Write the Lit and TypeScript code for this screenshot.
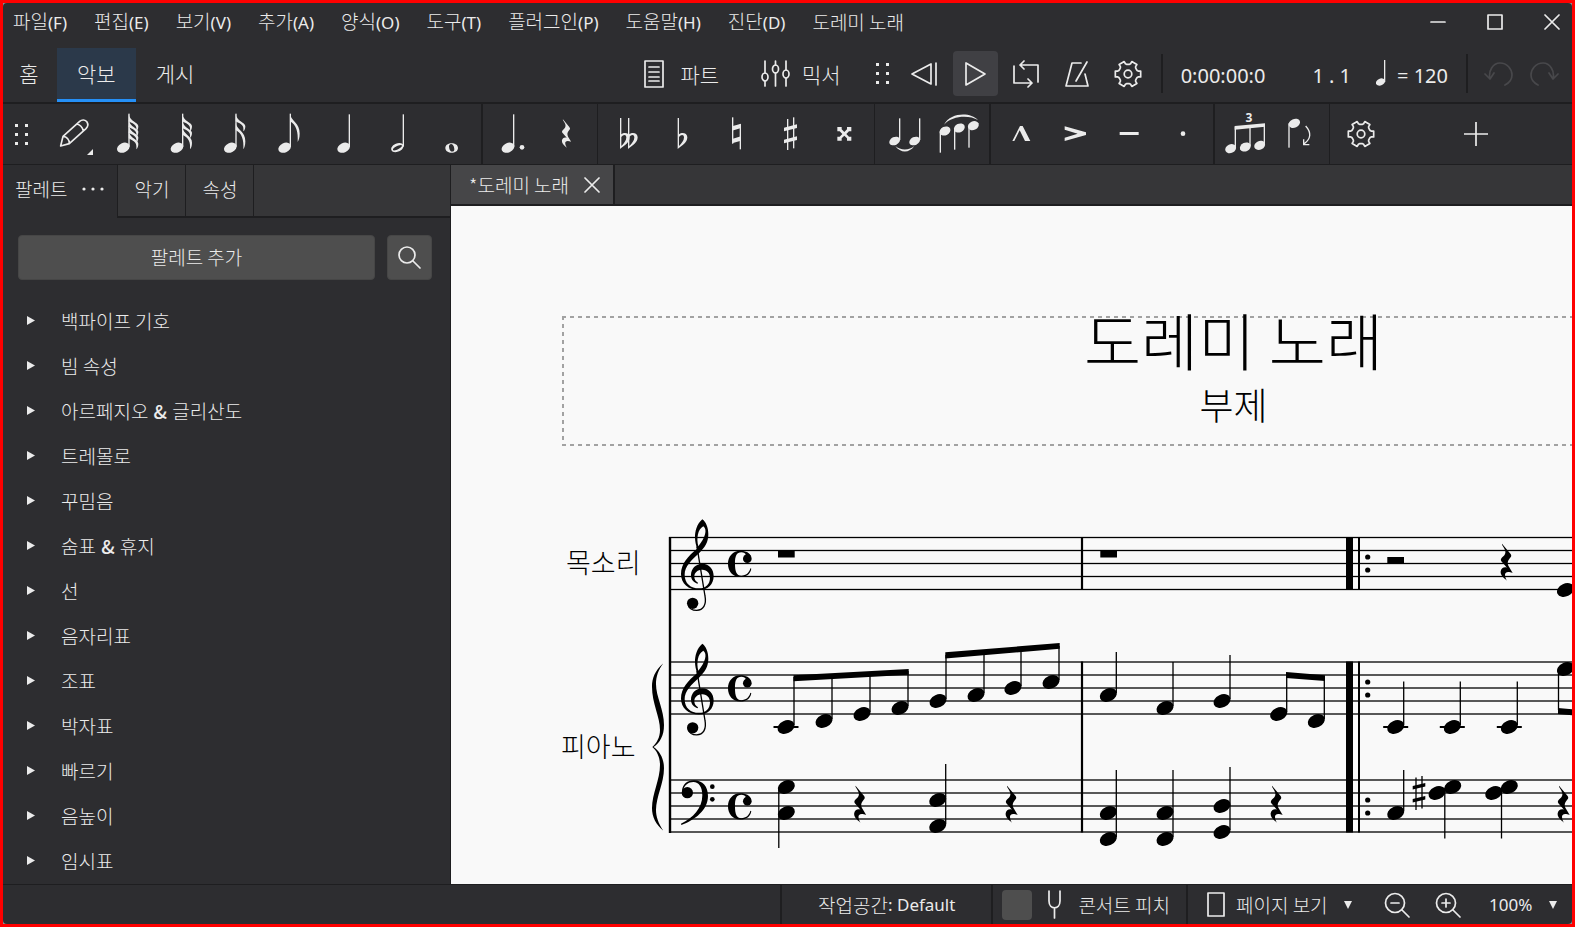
import { LitElement, html, svg, css } from "lit";
import { customElement, state } from "lit/decorators.js";

const MENUS = [
  ["파일", "(F)"], ["편집", "(E)"], ["보기", "(V)"], ["추가", "(A)"], ["양식", "(O)"],
  ["도구", "(T)"], ["플러그인", "(P)"], ["도움말", "(H)"], ["진단", "(D)"], ["도레미 노래", ""],
];

const PALETTES = [
  "백파이프 기호", "빔 속성", "아르페지오 & 글리산도", "트레몰로", "꾸밈음", "숨표 & 휴지", "선",
  "음자리표", "조표", "박자표", "빠르기", "음높이", "임시표",
];

/* ---------- shared glyphs ---------- */

const head = (x: number, y: number, rx = 20, ry = 14) =>
  svg`<ellipse cx=${x} cy=${y} rx=${rx} ry=${ry} transform="rotate(-25 ${x} ${y})"></ellipse>`;

const stem = (x: number, y1: number, y2: number, w = 4) =>
  svg`<rect x=${x - w / 2} y=${Math.min(y1, y2)} width=${w} height=${Math.abs(y2 - y1)}></rect>`;

const REST =
  "M-12,-55 L12,-26 C18,-19 16,-16 12,-12 C4,-2 4,4 8,13 L20,33 C2,26 -3,33 -3,38 C-3,45 0,51 3,56 C-10,46 -17,38 -16,28 C-14,18 -6,14 3,17 L-14,-2 C-18,-7 -14,-12 -8,-17 C0,-24 0,-32 -6,-42 L-12,-52Z";

const gearPath = (() => {
  const pts: string[] = [];
  for (let i = 0; i < 6; i++) {
    const a = i * 60;
    for (const [d, r] of [[-21, 9.8], [-16, 10.6], [-13, 13], [13, 13], [16, 10.6], [21, 9.8], [30, 9.6]]) {
      const t = ((a + d) * Math.PI) / 180;
      pts.push(`${(r * Math.cos(t)).toFixed(2)},${(r * Math.sin(t)).toFixed(2)}`);
    }
  }
  return "M" + pts.join("L") + "Z";
})();

const gear = html`<svg class="line" width="30" height="30" viewBox="-15 -15 30 30">
  <path d=${gearPath}></path><circle r="3.8"></circle></svg>`;

const handle = html`<svg class="solid" width="13" height="21" viewBox="0 0 13 21">
  <path d="M0,0h3v3h-3zM10,0h3v3h-3zM0,9h3v3h-3zM10,9h3v3h-3zM0,18h3v3h-3zM10,18h3v3h-3z"></path></svg>`;

const caret = html`<svg class="solid" width="10" height="8" viewBox="0 0 10 8"><path d="M1,0h8l-4,8z"></path></svg>`;

/* ---------- note input bar ---------- */

const flag = (s: number, y: number, h: number) =>
  svg`<path d="M${s},${y} C${s + 3},${y + 22} ${s + 30},${y + 26} ${s + 29},${y + h * 0.7} C${s + 29},${y + h * 0.85} ${s + 26},${y + h * 0.95} ${s + 23},${y + h} C${s + 25},${y + h * 0.65} ${s + 19},${y + 32} ${s},${y + 22} Z"></path>`;

const flagged = (hx: number, n: number) => {
  const s = hx + 17;
  const step = n > 3 ? 17 : n > 2 ? 20 : 26;
  const last = n === 1 ? 84 : 106 - step * (n - 1);
  return svg`${head(hx, 443)}${stem(s, 341, 440)}
    ${Array.from({ length: n }, (_, i) => flag(s - 1, 342 + i * step, i === n - 1 ? last : 52))}`;
};

const flatGlyph = (x: number) =>
  svg`<path fill-rule="evenodd" d="M${x},354 h4 v49 C${x + 12},395 ${x + 29},398 ${x + 29},412 C${x + 29},428 ${x + 12},438 ${x},447Z M${x + 4},411 C${x + 10},402 ${x + 19},403 ${x + 19},412 C${x + 19},422 ${x + 12},430 ${x + 4},438Z"></path>`;

const NOTE_GROUPS: { label: string; art: unknown }[][] = [
  [
    { label: "음표 입력", art: svg`<g class="pen"><path d="M-37,438 L-30,409 L20,364 C27,358 37,359 42,366 C46,373 45,380 39,386 L-11,431 Z M-30,409 C-19,410 -11,419 -11,431 M12,372 C20,374 28,382 31,392"></path></g><path d="M60,447 V465 H42Z"></path>` },
    { label: "64분음표", art: flagged(-11, 4) },
    { label: "32분음표", art: flagged(-12, 3) },
    { label: "16분음표", art: flagged(-14, 2) },
    { label: "8분음표", art: flagged(-13, 1) },
    { label: "4분음표", art: svg`${head(2, 443)}${stem(19, 343, 440)}` },
    { label: "2분음표", art: svg`<path fill-rule="evenodd" d="M-17,450 C-20,440 -6,428 8,429 C18,430 22,436 18,444 C12,456 -12,462 -17,450Z M-12,450 C-8,455 14,443 15,437 C13,431 -14,443 -12,450Z"></path>${stem(19, 343, 440)}` },
    { label: "온음표", art: svg`<path fill-rule="evenodd" d="M-17,444 C-17,425 21,425 21,444 C21,463 -17,463 -17,444Z M-6,440 C-5,459 11,458 10,447 C9,429 -6,428 -6,440Z"></path>` },
  ],
  [
    { label: "점음표", art: svg`${head(-15, 443)}${stem(2, 343, 440)}<circle cx="27" cy="442" r="7"></circle>` },
    { label: "쉼표", art: svg`<path transform="translate(-3 400) scale(.77)" d=${REST}></path>` },
  ],
  [
    { label: "겹내림표", art: svg`${flatGlyph(-24)}${flatGlyph(0)}` },
    { label: "내림표", art: flatGlyph(-13) },
    { label: "제자리표", art: svg`${stem(-10, 352, 431)}${stem(13, 372, 448)}<path d="M-12,379 L15,371 V384 L-12,392Z M-12,417 L15,409 V422 L-12,430Z"></path>` },
    { label: "올림표", art: svg`${stem(-7, 357, 450)}${stem(11, 352, 445)}<path d="M-18,383 L21,373 V384 L-18,394Z M-18,419 L21,409 V420 L-18,430Z"></path>` },
    { label: "겹올림표", art: svg`<path d="M-20,381 h13 v7 l8,8 l8,-8 v-7 h13 v13 h-7 l-8,8 l8,8 h7 v12 h-13 v-7 l-8,-8 l-8,8 v7 h-13 v-12 h7 l8,-8 l-8,-8 h-7Z"></path>` },
  ],
  [
    { label: "붙임줄", art: svg`${head(-31, 423, 17, 12)}${stem(-16, 355, 420)}${head(29, 423, 17, 12)}${stem(44, 355, 420)}<path d="M-29,438 C-14,452 13,452 28,438 C13,460 -14,460 -29,438Z"></path>` },
    { label: "이음줄", art: svg`${head(-42, 393, 17, 13)}${stem(-56, 395, 458)}${head(1, 384, 17, 13)}${stem(-13, 386, 449)}${head(43, 377, 17, 13)}${stem(30, 379, 443)}<path d="M-45,374 C-25,336 35,336 57,360 C32,345 -20,345 -45,374Z"></path>` },
  ],
  [
    { label: "마르카토", art: svg`<path d="M-26,423 L-3,378 H5 L28,423 H12 L-4,391 L-20,423Z"></path>` },
    { label: "악센트", art: svg`<path d="M-31,379 L33,397 V405 L-31,423 V413 L8,401 L-31,389Z"></path>` },
    { label: "테누토", art: svg`<path d="M-28,396 H29 V405 H-28Z"></path>` },
    { label: "스타카토", art: svg`<circle cx="0" cy="401" r="7"></circle>` },
  ],
  [
    { label: "셋잇단음표", art: svg`<text x="12" y="366" text-anchor="middle">3</text><path d="M-31,378 L60,370 V380 L-31,389Z"></path>${stem(-29, 380, 442)}${stem(15, 378, 438)}${stem(58, 374, 434)}${head(-43, 446, 17, 13)}${head(1, 441, 17, 13)}${head(44, 436, 17, 13)}` },
    { label: "방향 뒤집기", art: svg`${head(-14, 370, 18, 13)}${stem(-30, 370, 443)}<path class="thin" d="M20,378 C38,398 36,416 15,432 M14,418 V434 H31"></path>` },
  ],
];

/* ---------- sheet music ---------- */

const hLine = (x1: number, x2: number, y: number, w = 1.3) =>
  svg`<rect x=${x1} y=${y - w / 2} width=${x2 - x1} height=${w}></rect>`;
const vLine = (x: number, y1: number, y2: number, w = 1.3) =>
  svg`<rect x=${x - w / 2} y=${y1} width=${w} height=${y2 - y1}></rect>`;
const n = (x: number, y: number) => head(x, y, 8.9, 6.4);
const up = (x: number, ys: number[], top: number) =>
  svg`${ys.map((y) => n(x, y))}${vLine(x + 8, top, Math.max(...ys) - 2)}`;
const ledger = (x: number) => hLine(x - 12.5, x + 12.5, 727, 2);
const rest = (x: number, y: number) => svg`<path transform="translate(${x} ${y}) scale(.3333)" d=${REST}></path>`;

const treble = (dy: number) => svg`<g transform="translate(550 ${500 + dy}) scale(.3333)">
  <path fill-rule="evenodd" d="M441,146 C415,168 393,190 393,222 C393,250 415,270 447,270 C475,270 491,252 491,228 C491,208 478,191 457,191 C437,191 423,206 423,225 C423,240 432,248 443,251 L444,248 C437,244 433,237 433,230 C433,217 443,209 457,209 C472,209 480,220 480,233 C480,253 467,265 447,265 C422,265 404,250 404,224 C404,200 425,180 447,160 C465,142 475,127 475,103 C475,82 468,66 457,58 C440,72 435,95 435,112 C435,125 438,135 441,146Z M460,79 C473,88 466,114 445,139 C439,115 443,88 460,79Z"></path>
  <path class="curl" d="M441,140 L465,288 C470,314 460,331 440,331 C428,331 418,326 415,316"></path>
  <circle cx="428" cy="310" r="17"></circle></g>`;

const common = (dy: number) => svg`<g transform="translate(550 ${500 + dy}) scale(.3333)">
  <path d="M571,152 C548,152 534,170 534,191 C534,213 548,231 571,231 C590,231 601,222 604,206 L601,205 C598,219 588,227 574,227 C560,227 555,215 555,191 C555,168 560,157 574,157 C582,157 586,160 588,165 L604,170 C600,159 588,152 571,152Z"></path>
  <circle cx="592" cy="176" r="13"></circle></g>`;

const RUN: [number, number][] = [[786, 727], [824, 721], [862, 714], [900, 708], [938, 701], [976, 695], [1013, 688], [1051, 682]];
const STAVES = [537.5, 662, 780];

const sheet = html`<svg class="system" width="1454" height="370" viewBox="451 500 1454 370" role="img" aria-label="악보">
  ${STAVES.map((y) => [0, 1, 2, 3, 4].map((i) => hLine(669, 1905, y + i * 13)))}
  ${vLine(670, 537, 833, 2.4)}
  ${[[537, 590], [661.5, 832.5]].map(([a, b]) => svg`${vLine(1082, a, b, 2.2)}${vLine(1349.5, a, b, 7)}${vLine(1359, a, b, 2)}`)}
  ${[557, 570, 682, 695, 800, 813].map((y) => svg`<circle cx="1367.7" cy=${y} r="2.6"></circle>`)}
  ${treble(0)}${treble(124.5)}${common(0)}${common(124.5)}${common(242.5)}
  <g transform="translate(550 500) scale(.3333)">
    <path d="M340,490 C315,512 306,535 306,560 C306,610 330,650 330,690 C330,712 320,730 307,741 C320,752 330,770 330,795 C330,840 306,880 306,925 C306,950 318,975 340,992 C325,970 318,950 318,930 C318,890 342,850 342,805 C342,775 330,755 311,741 C330,727 342,708 342,675 C342,630 318,590 318,552 C318,530 325,510 340,490Z"></path>
    <circle cx="412" cy="878" r="17"></circle><circle cx="487" cy="860" r="7"></circle><circle cx="487" cy="898" r="7"></circle>
    <path d="M396,876 C396,852 413,841 432,841 C458,841 474,860 474,888 C474,930 435,960 394,975 L393,971 C430,953 457,925 457,886 C457,862 447,846 430,846 C415,846 403,856 401,868Z"></path>
  </g>
  <text x="566" y="573">목소리</text>
  <text x="561" y="757">피아노</text>
  <rect x="778" y="550.5" width="16.7" height="7"></rect>
  <rect x="1100.3" y="550.5" width="16.7" height="7"></rect>
  <rect x="1387.3" y="557" width="16.7" height="7"></rect>
  ${rest(1506, 562)}${n(1565.5, 590)}
  ${RUN.map(([x, y], i) => up(x, [y], i < 4 ? 677 - i * 2 : 655 - (i - 4) * 3))}
  ${ledger(786)}
  <path d="M793.5,675.3 L908.7,669 V674.7 L793.5,681.3Z M945.3,652.3 L1059.7,643 V648.8 L945.3,658.4Z M1286,672 L1325,675.3 V681 L1286,678Z M1558,708 L1600,712 V718 L1558,714Z"></path>
  ${up(1108.3, [695], 652)}${up(1165, [708], 662)}${up(1222, [701], 655)}
  ${up(1278.7, [714], 674)}${up(1316.3, [721], 677)}
  ${[1395.7, 1452.3, 1509.3].map((x) => svg`${up(x, [727], 681.5)}${ledger(x)}`)}
  ${n(1565.5, 669)}${vLine(1558.5, 671, 710)}
  ${n(786.3, 787)}${n(786.3, 813)}${vLine(778.8, 789, 848)}
  ${up(937.7, [800, 826], 764)}${up(1108.3, [813, 839], 770)}${up(1165, [813, 839], 770)}${up(1222, [806, 832], 767)}
  ${rest(859.5, 804)}${rest(1011, 804)}${rest(1276, 804)}${rest(1563, 804)}
  ${up(1395.7, [813], 770)}
  ${vLine(1416, 777.5, 810)}${vLine(1422, 776, 808.5)}
  <path d="M1412.7,786 L1425.3,783 V786.5 L1412.7,789.5Z M1412.7,799 L1425.3,796 V799.5 L1412.7,802.5Z"></path>
  ${n(1437, 793)}${n(1452.7, 787)}${vLine(1444.8, 788, 838.5)}
  ${n(1493.7, 793)}${n(1509.3, 787)}${vLine(1501.5, 788, 838.5)}
</svg>`;

@customElement("app-root")
export class AppRoot extends LitElement {
  @state() private tab = "악보";

  static styles = css`
    :host {
      display: block;
      height: 100vh;
      box-sizing: border-box;
      border: 3px solid #ff0000;
      background: #8d8d8f;
      color: #ebebeb;
      font: 300 19px/24px "Noto Sans CJK KR", sans-serif;
      overflow: hidden;
    }
    * { box-sizing: border-box; }
    button, select, input { font: inherit; color: inherit; background: none; border: 0; margin: 0; padding: 0; }
    button { cursor: pointer; white-space: nowrap; }
    svg { display: block; flex: none; }
    .solid { fill: #ebebeb; }
    .line { fill: none; stroke: #ebebeb; stroke-width: 1.7; stroke-linejoin: round; stroke-linecap: round; }
    .latin { font-family: "Noto Sans", sans-serif; font-weight: 400; font-size: 17px; }
    .window { height: 100%; display: flex; flex-direction: column; background: #2d2d30; border-radius: 4px; overflow: hidden; }

    .titlebar { display: flex; justify-content: space-between; align-items: center; height: 38px; flex: none; }
    .menus { display: flex; gap: 27px; padding-left: 10px; }
    .controls { display: flex; gap: 17px; }
    .controls button { width: 40px; height: 38px; display: grid; place-items: center; }

    .main-bar { display: flex; justify-content: space-between; height: 63px; padding-top: 7px; border-bottom: 2px solid #1e1e20; flex: none; }
    .tabs { display: flex; font-size: 21px; }
    .tabs button { min-width: 54px; padding: 0 20px 2px; border-bottom: 3px solid transparent; }
    .tabs button:first-child { padding: 0 18px 2px 16px; }
    .tabs .on { background: #2b394a; border-bottom-color: #2590f7; }
    .tools { display: flex; align-items: center; padding: 0 6px 3px 0; }
    .named { display: flex; align-items: center; gap: 15px; font-size: 21px; margin-right: 42px; }
    .named.mixer { gap: 12px; margin-right: 35px; }
    .transport { display: flex; gap: 6px; margin: 0 10px 0 13px; }
    .square { width: 45px; height: 45px; display: grid; place-items: center; border-radius: 4px; }
    .play { background: #404044; }
    .rule { width: 2px; height: 39px; background: #1e1e20; }
    .digits { font: 400 20px/24px "Noto Sans", sans-serif; padding-top: 4px; }
    .time { margin-left: 18px; }
    .beat { margin-left: 47px; }
    .tempo { display: flex; gap: 11px; margin: 0 18px 0 25px; }
    .history { display: flex; padding-left: 8px; }
    .history .line { stroke: #48484b; }

    .note-bar { display: flex; align-items: center; height: 61px; border-bottom: 1px solid #1e1e20; fill: #ebebeb; flex: none; }
    .note-bar .handle { padding: 0 18px 0 12px; }
    .group { display: flex; padding-right: 3px; border-right: 2px solid #1e1e20; height: 60px; }
    .group + .group { padding-left: 3px; border-right-width: 1px; }
    .group:nth-of-type(4), .group:nth-of-type(5) { border-right-width: 2px; }
    .cell { width: 54px; height: 60px; display: grid; place-items: center; }
    .cell text { font: 700 36px "Noto Sans", sans-serif; }
    .pen, .thin { fill: none; stroke: #ebebeb; stroke-width: 5; stroke-linejoin: round; }
    .thin { stroke-width: 4; }
    .after { margin-left: 4px; }
    .add { margin-left: 61px; }

    .body { flex: 1; display: flex; min-height: 0; }
    .panel { width: 448px; flex: none; border-right: 1px solid #1e1e20; overflow: hidden; }
    .panel-tabs { display: flex; height: 53px; }
    .panel-tabs > * { padding: 0 16px 3px; border-right: 1px solid #1e1e20; border-bottom: 2px solid #1e1e20; background: #363638; }
    .panel-tabs .current { display: flex; align-items: center; gap: 15px; padding: 0 12px 5px; background: none; border-bottom: 0; }
    .panel-tabs .fill { flex: 1; border-right: 0; }
    .finder { display: flex; gap: 12px; padding: 17px 18px 18px 15px; }
    .finder button { height: 45px; background: #4e4e4e; border-radius: 4px; border: 1px solid #464646; }
    .finder .wide { flex: 1; padding-bottom: 1px; }
    .finder .seek { width: 45px; display: grid; place-items: center; }
    .list { list-style: none; margin: 0; padding: 0; }
    .list button { display: flex; align-items: center; gap: 26px; width: 100%; height: 45px; padding-left: 24px; text-align: left; }
    .amp { font-weight: 500; padding: 0 1px; }

    .work { flex: 1; min-width: 0; display: flex; flex-direction: column; }
    .docs { display: flex; height: 41px; background: #363638; border-bottom: 2px solid #1e1e20; flex: none; }
    .doc { display: flex; align-items: center; gap: 15px; padding: 0 13px 0 18px; background: #464648; border-right: 2px solid #1e1e20; }
    .canvas { flex: 1; overflow: hidden; background: #f9f9f9; color: #000; min-height: 0; }
    .page { width: 1454px; padding-top: 110px; }
    .frame {
      margin: 0 0 54px 111px; height: 130px; text-align: center;
      --h: repeating-linear-gradient(90deg, #a2a2a2 0 4px, transparent 4px 8px);
      --v: repeating-linear-gradient(#a2a2a2 0 4px, transparent 4px 8px);
      background: var(--h) 0 0 / 100% 2px no-repeat, var(--h) 0 100% / 100% 2px no-repeat, var(--v) 0 0 / 2px 100% no-repeat;
    }
    .frame h1 { margin: 0; font: 300 62px/46px "Noto Sans CJK KR", sans-serif; }
    .frame h2 { margin: 0; padding-top: 20px; font: 300 37px/44px "Noto Sans CJK KR", sans-serif; }
    .system text { font: 300 27px "Noto Sans CJK KR", sans-serif; }
    .curl { fill: none; stroke: #000; stroke-width: 4; }

    .status { display: flex; justify-content: flex-end; height: 40px; border-top: 1px solid #1e1e20; flex: none; }
    .status > * { border-left: 2px solid #1e1e20; display: flex; align-items: center; }
    .space { padding: 0 36px; white-space: pre; }
    .pitch { padding: 0 16px 0 9px; }
    .pitch input { appearance: none; width: 30px; height: 30px; background: #4e4e4e; border-radius: 4px; margin-right: 15px; }
    .pitch svg { margin-right: 16px; }
    .view { padding: 0 14px 0 19px; }
    .pick { display: flex; align-items: center; gap: 15px; }
    .pick select { appearance: none; }
    .pick svg { pointer-events: none; }
    .view > svg { margin-right: 11px; }
    .zooms { display: flex; gap: 25px; margin: 0 28px 0 31px; }
  `;

  private latin(text: string, cls = "latin") {
    return text ? html`<span class=${cls}>${text}</span>` : "";
  }

  private palette(name: string) {
    const [a, b] = name.split("&");
    return b === undefined ? name : html`${a}<span class="amp">&amp;</span>${b}`;
  }

  render() {
    return html`<div class="window">
      <header class="titlebar">
        <nav class="menus" aria-label="메뉴">
          ${MENUS.map(([name, key]) => html`<button>${name}${this.latin(key)}</button>`)}
        </nav>
        <div class="controls">
          <button aria-label="최소화"><svg class="line" width="16" height="16"><path d="M1,8H15"></path></svg></button>
          <button aria-label="최대화"><svg class="line" width="16" height="16"><path d="M1,1H15V15H1Z"></path></svg></button>
          <button aria-label="닫기"><svg class="line" width="16" height="16"><path d="M1,1L15,15M15,1L1,15"></path></svg></button>
        </div>
      </header>

      <div class="main-bar">
        <nav class="tabs">
          ${["홈", "악보", "게시"].map((t) => html`<button class=${t === this.tab ? "on" : ""} @click=${() => (this.tab = t)}>${t}</button>`)}
        </nav>
        <div class="tools">
          <button class="named"><svg class="line" width="22" height="28"><path d="M2,1H20V27H2ZM6,7H16M6,12H16M6,17H16M6,21H16"></path></svg>파트</button>
          <button class="named mixer"><svg class="line" width="29" height="27"><path d="M4,1V13M4,21V26M14.5,1V5M14.5,13V26M25,1V10M25,18V26"></path><ellipse cx="4" cy="17" rx="3" ry="4"></ellipse><ellipse cx="14.5" cy="9" rx="3" ry="4"></ellipse><ellipse cx="25" cy="14" rx="3" ry="4"></ellipse></svg>믹서</button>
          ${handle}
          <div class="transport">
            <button class="square" aria-label="되감기"><svg class="line" width="28" height="24"><path d="M21,2V22L2,12ZM26,1V23"></path></svg></button>
            <button class="square play" aria-label="재생"><svg class="line" width="22" height="24"><path d="M2,1V23L21,12Z"></path></svg></button>
            <button class="square" aria-label="반복"><svg class="line" width="28" height="28"><path d="M2,6V23H20M16,19L20,23L16,27M26,22V5H8M12,1L8,5L12,9"></path></svg></button>
            <button class="square" aria-label="메트로놈"><svg class="line" width="26" height="28"><path d="M17,3H8L2,26H24L21,14M23,2L12,21"></path></svg></button>
            <button class="square" aria-label="재생 설정">${gear}</button>
          </div>
          <span class="rule"></span>
          <span class="digits time">0:00:00:0</span>
          <span class="digits beat">1 . 1</span>
          <span class="tempo"><svg class="solid" width="10" height="26" viewBox="0 0 10 26"><path d="M8,0h1.3v22h-1.3z"></path><ellipse cx="4.5" cy="22" rx="4.8" ry="3.4" transform="rotate(-25 4.5 22)"></ellipse></svg><span class="digits">= 120</span></span>
          <span class="rule"></span>
          <div class="history">
            <button class="square" aria-label="실행 취소"><svg class="line" width="30" height="26"><path d="M6,18C4,10 9,2 16,2C23,2 28,8 28,14C28,19 25,22 21,24M1,13L6,18L10,12"></path></svg></button>
            <button class="square" aria-label="다시 실행"><svg class="line" width="30" height="26"><path d="M24,18C26,10 21,2 14,2C7,2 2,8 2,14C2,19 5,22 9,24M29,13L24,18L20,12"></path></svg></button>
          </div>
        </div>
      </div>

      <div class="note-bar">
        <span class="handle">${handle}</span>
        ${NOTE_GROUPS.map((g) => html`<div class="group">${g.map((c) => html`<button class="cell" aria-label=${c.label}>
          <svg class="solid" width="54" height="60" viewBox="-81 312 162 180">${c.art}</svg></button>`)}</div>`)}
        <button class="cell after" aria-label="사용자 지정">${gear}</button>
        <button class="cell add" aria-label="추가"><svg class="line" width="24" height="24"><path d="M0,12H24M12,0V24"></path></svg></button>
      </div>

      <div class="body">
        <aside class="panel">
          <div class="panel-tabs">
            <button class="current">팔레트<svg class="solid" width="23" height="4"><circle cx="2" cy="2" r="1.6"></circle><circle cx="11" cy="2" r="1.6"></circle><circle cx="20" cy="2" r="1.6"></circle></svg></button>
            <button>악기</button><button>속성</button><span class="fill"></span>
          </div>
          <div class="finder">
            <button class="wide">팔레트 추가</button>
            <button class="seek" aria-label="검색"><svg class="line" width="23" height="23"><circle cx="9" cy="9" r="8"></circle><path d="M15,15L22,22"></path></svg></button>
          </div>
          <ul class="list">
            ${PALETTES.map((p) => html`<li><button><svg class="solid" width="8" height="9"><path d="M0,0L8,4.5L0,9Z"></path></svg><span>${this.palette(p)}</span></button></li>`)}
          </ul>
        </aside>
        <main class="work">
          <div class="docs">
            <div class="doc"><span>*도레미 노래</span><button aria-label="탭 닫기"><svg class="line" width="16" height="16"><path d="M1,1L15,15M15,1L1,15"></path></svg></button></div>
          </div>
          <div class="canvas"><div class="page">
            <div class="frame"><h1>도레미 노래</h1><h2>부제</h2></div>
            ${sheet}
          </div></div>
        </main>
      </div>

      <footer class="status">
        <button class="space">작업공간${this.latin(": Default")}</button>
        <label class="pitch"><input type="checkbox" /><svg class="line" width="15" height="29"><path d="M2,1V11C2,20 13,20 13,11V1M7.5,18V28"></path></svg>콘서트 피치</label>
        <div class="view">
          <svg class="line" width="18" height="25"><path d="M1,1H17V24H1Z"></path></svg>
          <label class="pick"><select aria-label="보기 방식"><option>페이지 보기</option></select>${caret}</label>
          <div class="zooms">
            <button aria-label="축소"><svg class="line" width="26" height="26"><circle cx="11" cy="11" r="9.5"></circle><path d="M18,18L25,25M7,11H15"></path></svg></button>
            <button aria-label="확대"><svg class="line" width="26" height="26"><circle cx="11" cy="11" r="9.5"></circle><path d="M18,18L25,25M7,11H15M11,7V15"></path></svg></button>
          </div>
          <label class="pick"><select class="latin" aria-label="확대 비율"><option>100%</option></select>${caret}</label>
        </div>
      </footer>
    </div>`;
  }
}
